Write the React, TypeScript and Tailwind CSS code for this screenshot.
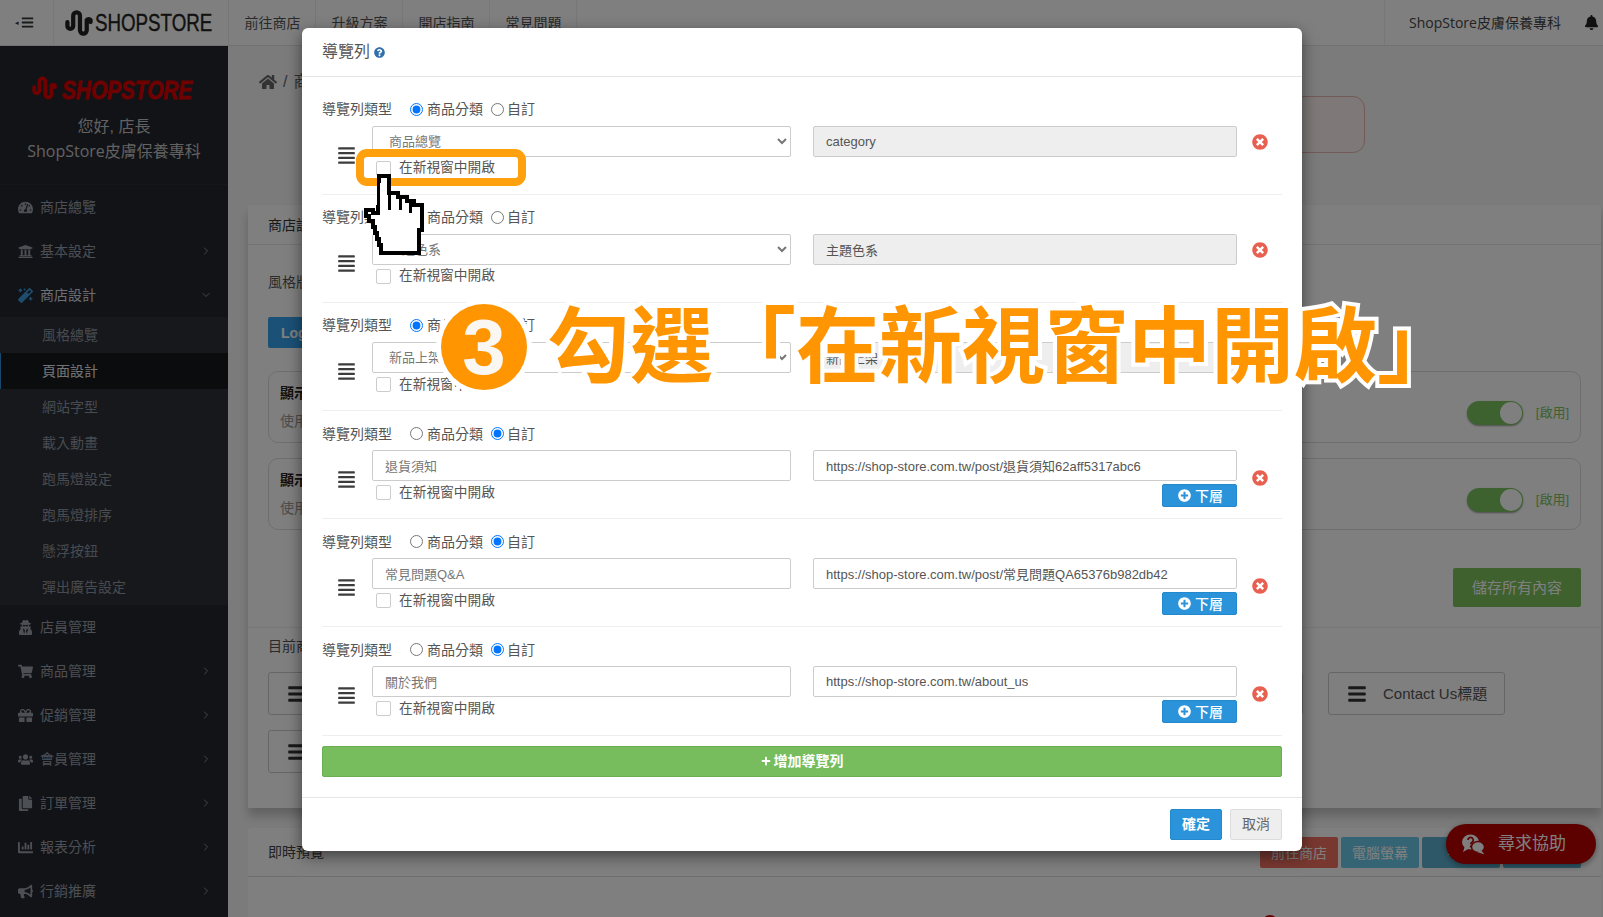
import React from "react";
import { ChevronDown, ChevronRight } from "lucide-react";
import {
  FaAlignJustify, FaBars, FaBell, FaBullhorn, FaChartBar, FaCopy, FaGift, FaHome, FaMagic,
  FaPlus, FaPlusCircle, FaQuestionCircle, FaShoppingCart, FaTachometerAlt, FaTimesCircle, FaUniversity, FaUserSecret, FaUsers,
} from "react-icons/fa";

const SideItem = ({ icon, label, arrow, open, active }: { icon: React.ReactNode; label: string; arrow?: boolean; open?: boolean; active?: boolean }) => (
  <div className={`h-[44px] flex items-center pl-[17px] pr-[16px] text-sm ${active ? "text-[#d8dde4]" : "text-[#989ea7]"}`}>
    <span className={`w-[16px] flex justify-center text-[15px] ${active ? "text-[#3c9be0]" : "text-[#989ea7]"}`}>{icon}</span>
    <span className="ml-[7px] flex-1">{label}</span>
    {arrow && <ChevronRight size={12} strokeWidth={1.5} className="text-[#a6acb4]" />}
    {open && <ChevronDown size={12} strokeWidth={1.5} className="text-[#a6acb4]" />}
  </div>
);

const Wave = ({ className }: { className: string }) => (
  <svg viewBox="0 0 29 28" className={`shrink-0 ${className}`} fill="none" stroke="currentColor" strokeWidth="4.4" strokeLinecap="round">
    <path d="M2.5 13V17A3 3 0 0 0 8.5 17V6.5A3.5 3.5 0 0 1 15.5 6.5V21.5A3.5 3.5 0 0 0 22.5 21.5V11A2.5 2.5 0 0 1 26.5 11V13" />
  </svg>
);

const TopBar = () => (
  <div className="h-[46px] bg-white border-b border-[#e2e2e2] flex text-sm text-[#555]">
    <div className="w-[54px] border-r border-[#eee] flex items-center justify-center gap-[2px] pr-[4px] text-[#333]">
      <span className="text-[7px]">◂</span>
      <FaBars className="text-[13px]" />
    </div>
    <div className="w-[175px] border-r border-[#eee] flex items-center pl-[11px] text-[#222] overflow-hidden">
      <Wave className="w-[28px] h-[28px]" />
      <span className="text-[24px] leading-none ml-[2px] origin-left scale-x-[0.78] whitespace-nowrap [-webkit-text-stroke:0.4px_#222]">SHOPSTORE</span>
    </div>
    {["前往商店", "升級方案", "開店指南", "常見問題"].map((t) => (
      <div key={t} className="w-[87px] border-r border-[#eee] flex items-center justify-center pl-[1px]">{t}</div>
    ))}
    <div className="flex-1" />
    <div className="w-[219px] border-l border-[#eee] flex items-center pl-[24px] [font-family:'Open_Sans','Noto_Sans_CJK_TC',sans-serif] text-[#444]">
      <span>ShopStore皮膚保養專科</span>
      <FaBell className="ml-[23px] text-[15px] text-[#222]" />
    </div>
  </div>
);

const Sidebar = () => (
  <aside className="w-[228px] shrink-0 bg-[#25272f] overflow-hidden">
    <div className="h-[139px] border-b border-[#2c2e37] flex flex-col items-center pt-[28px]">
      <div className="flex items-center text-[#dc0000] w-[165px] h-[28px]">
        <Wave className="w-[25px] h-[28px]" />
        <span className="font-bold italic text-[26px] leading-none ml-[5px] mt-[3px] origin-left scale-x-[0.8] whitespace-nowrap [-webkit-text-stroke:0.8px_#dc0000]">SHOPSTORE</span>
      </div>
      <div className="mt-[12px] text-base leading-[25px] text-center text-[#c4c4c4]">
        您好, 店長
        <br />
        <span className="[font-family:'Open_Sans','Noto_Sans_CJK_TC',sans-serif]">ShopStore皮膚保養專科</span>
      </div>
    </div>
    <SideItem icon={<FaTachometerAlt />} label="商店總覽" />
    <SideItem icon={<FaUniversity />} label="基本設定" arrow />
    <SideItem icon={<FaMagic />} label="商店設計" open active />
    <div className="bg-[#2d3038] text-sm text-[#8f969f]">
      {["風格總覽", "頁面設計", "網站字型", "載入動畫", "跑馬燈設定", "跑馬燈排序", "懸浮按鈕", "彈出廣告設定"].map((t) =>
        t === "頁面設計" ? (
          <div key={t} className="h-[36px] flex items-center pl-[41px] bg-[#17181c] border-l border-[#2f8fd6] text-[#e8e8e8]">{t}</div>
        ) : (
          <div key={t} className="h-[36px] flex items-center pl-[42px]">{t}</div>
        ),
      )}
    </div>
    <SideItem icon={<FaUserSecret />} label="店員管理" />
    <SideItem icon={<FaShoppingCart />} label="商品管理" arrow />
    <SideItem icon={<FaGift />} label="促銷管理" arrow />
    <SideItem icon={<FaUsers />} label="會員管理" arrow />
    <SideItem icon={<FaCopy />} label="訂單管理" arrow />
    <SideItem icon={<FaChartBar />} label="報表分析" arrow />
    <SideItem icon={<FaBullhorn />} label="行銷推廣" arrow />
  </aside>
);

const FeaturePanel = ({ className }: { className: string }) => (
  <div className={`h-[72px] border border-[#ddd] rounded-[10px] flex items-center pl-[11px] pr-[11px] ${className}`}>
    <div className="flex-1 text-[#444] text-sm leading-[28px]">
      <div className="font-bold text-[#222]">顯示</div>
      <div className="text-[#999]">使用</div>
    </div>
    <div className="mt-[12px] w-[56px] h-[24px] rounded-full bg-[#7dc45f] flex justify-end items-center pr-[1px] shadow-[0_1px_2px_rgba(0,0,0,0.4)]">
      <span className="w-[22px] h-[22px] rounded-full bg-white" />
    </div>
    <span className="mt-[12px] ml-[13px] text-[13px] text-[#7dc45f]">[啟用]</span>
  </div>
);

const NavBox = ({ w, label }: { w: string; label?: string }) => (
  <div className={`${w} h-[43px] border border-[#ccc] rounded-[3px] flex items-center pl-[18px] shrink-0 text-[15px] text-[#555]`}>
    <FaBars className="text-[20px] text-[#333]" />
    {label && <span className="ml-[16px]">{label}</span>}
  </div>
);

const Main = () => (
  <main className="flex-1 bg-[#f6f6f6] min-w-0 overflow-hidden pl-5 pr-[2px]">
    <div className="h-[159px] pt-[26px]">
      <div className="h-[20px] flex items-center text-[#666] text-base gap-[6px] pl-[11px]">
        <FaHome className="text-[18px]" />
        <span>/</span>
        <span>商店設計</span>
      </div>
      <div className="w-[500px] h-[57px] mt-[4px] ml-[617px] border border-[#e4b4ae] bg-[#fdf1f0] rounded-[12px]" />
    </div>

    <section className="h-[603px] bg-white rounded-t-[4px] shadow-[0_8px_10px_rgba(0,0,0,0.2)] text-sm text-[#555]">
      <div className="h-[40px] border-b border-[#e6e6e6] flex items-center px-5 text-[#333]">商店設計</div>
      <div className="px-5 pt-[27px]">
        <div className="h-[20px] leading-[20px]">風格版型</div>
        <div className="mt-[25px] w-[90px] h-[31px] bg-[#36a3ee] rounded-[2px] text-white font-bold flex items-center pl-[13px]">Logo</div>
        <FeaturePanel className="mt-[23px]" />
        <FeaturePanel className="mt-[15px]" />
        <div className="mt-[38px] flex justify-end">
          <div className="w-[128px] h-[39px] bg-[#7cc25c] rounded-[2px] text-white text-[15px] flex items-center justify-center">儲存所有內容</div>
        </div>
      </div>
      <div className="mt-[20px] border-t border-[#eee] px-5 pt-[8px]">
        <div className="h-[20px] leading-[20px]">目前商店導覽列</div>
        <div className="mt-[16px] flex gap-[25px]">
          <NavBox w="w-[187px]" />
          <NavBox w="w-[187px]" />
          <NavBox w="w-[187px]" />
          <NavBox w="w-[187px]" />
          <NavBox w="w-[187px]" />
          <NavBox w="w-[177px]" label="Contact Us標題" />
        </div>
        <div className="mt-[15px]">
          <NavBox w="w-[187px]" />
        </div>
      </div>
    </section>

    <section className="mt-[20px] h-[100px] bg-white rounded-t-[4px]">
      <div className="h-[49px] border-b border-[#ddd] flex items-center justify-between pl-5 pr-5 text-sm text-[#444]">
        <span className="mb-[1px]">即時預覽</span>
        <div className="flex gap-[3px] text-white text-sm mt-[1px]">
          <div className="w-[78px] h-[31px] bg-[#f07060] flex items-center justify-center rounded-[2px]">前往商店</div>
          <div className="w-[78px] h-[31px] bg-[#6ac8e8] flex items-center justify-center rounded-[2px]">電腦螢幕</div>
          <div className="w-[78px] h-[31px] bg-[#5cb0d0] flex items-center justify-center rounded-[2px]">平板</div>
          <div className="w-[78px] h-[31px] bg-[#5cb0d0] flex items-center justify-center rounded-[2px]">手機</div>
        </div>
      </div>
      <div className="ml-[1014px] mt-[38px] w-4 h-4 rounded-full bg-[#d00000]" />
    </section>
  </main>
);

type Row = { kind: "cat" | "own"; name: string; url: string };
const rows: Row[] = [
  { kind: "cat", name: "商品總覽", url: "category" },
  { kind: "cat", name: "主題色系", url: "主題色系" },
  { kind: "cat", name: "新品上架", url: "新品上架" },
  { kind: "own", name: "退貨須知", url: "https://shop-store.com.tw/post/退貨須知62aff5317abc6" },
  { kind: "own", name: "常見問題Q&A", url: "https://shop-store.com.tw/post/常見問題QA65376b982db42" },
  { kind: "own", name: "關於我們", url: "https://shop-store.com.tw/about_us" },
];

const NavRow = ({ row, i }: { row: Row; i: number }) => (
  <div className="h-[108.2px] border-b border-[#eee] text-sm text-[#555]">
    <div className="h-[39px] pt-[12.5px] flex items-start leading-[20px]">
      <span className="w-[88px]">導覽列類型</span>
      <label className="flex items-center h-[20px]">
        <input type="radio" name={`k${i}`} defaultChecked={row.kind === "cat"} className="m-0 w-[13px] h-[13px]" />
        <span className="ml-[4px]">商品分類</span>
      </label>
      <label className="flex items-center h-[20px] ml-[8px]">
        <input type="radio" name={`k${i}`} defaultChecked={row.kind === "own"} className="m-0 w-[13px] h-[13px]" />
        <span className="ml-[3px]">自訂</span>
      </label>
    </div>
    <div className="flex items-start">
      <div className="w-[50px] pl-[15px] pt-[20px] text-[#3c3c3c]">
        <FaAlignJustify className="text-[19px]" />
      </div>
      <div className="w-[419px]">
        {row.kind === "cat" ? (
          <select className="w-full h-[31px] border border-[#ccc] rounded-[2px] bg-white pl-[12px] text-[#777] text-[13px]">
            <option>{row.name}</option>
          </select>
        ) : (
          <input readOnly defaultValue={row.name} className="w-full h-[31px] border border-[#ccc] rounded-[2px] px-[12px] text-[#777] text-[13px]" />
        )}
        <label className="flex items-center mt-[2px] h-[19px] pl-[4px]">
          <input type="checkbox" className="appearance-none m-0 w-[15px] h-[15px] border border-[#ccc] rounded-[2px] bg-white" />
          <span className="ml-[8px] text-[13.7px]">在新視窗中開啟</span>
        </label>
      </div>
      <div className="w-[424px] ml-[22px]">
        <input
          readOnly
          defaultValue={row.url}
          className={`w-full h-[31px] border border-[#ccc] rounded-[2px] px-[12px] text-[#555] text-[13px] ${row.kind === "cat" ? "bg-[#eee]" : "bg-white"}`}
        />
        {row.kind === "own" && (
          <div className="flex justify-end mt-[3px]">
            <div className="w-[75px] h-[23px] bg-[#2a93d9] border border-[#2488cc] rounded-[2px] text-white font-medium flex items-center justify-center gap-[4px] pl-[2px]">
              <FaPlusCircle className="text-[13px]" />
              <span>下層</span>
            </div>
          </div>
        )}
      </div>
      <div className={`w-[45px] flex justify-center text-[#e8604f] text-[16px] ${row.kind === "own" ? "pt-[20px]" : "pt-[8px]"}`}>
        <FaTimesCircle />
      </div>
    </div>
  </div>
);

const Modal = () => (
  <div className="absolute left-[302px] top-[28px] w-[1000px] h-[823px] bg-white rounded-[6px] shadow-[0_5px_15px_rgba(0,0,0,0.5)] flex flex-col">
    <div className="h-[49px] border-b border-[#e5e5e5] flex items-center pl-5 text-base text-[#555]">
      <span>導覽列</span>
      <FaQuestionCircle className="ml-[4px] text-[11px] text-[#2f6fad]" />
    </div>
    <div className="px-5 pt-[9.5px]">
      {rows.map((r, i) => (
        <NavRow key={i} row={r} i={i} />
      ))}
      <div className="mt-[10.3px] h-[31px] bg-[#77bd5e] border border-[#6cae54] rounded-[2px] text-white text-sm font-bold flex items-center justify-center gap-[3px]">
        <FaPlus className="text-[10px]" />
        <span>增加導覽列</span>
      </div>
    </div>
    <div className="mt-[20px] border-t border-[#e5e5e5] flex justify-end gap-[8px] pr-5 pt-[11px]">
      <div className="w-[52px] h-[31px] bg-[#2a93d9] border border-[#2488cc] rounded-[2px] text-white text-sm font-bold flex items-center justify-center">確定</div>
      <div className="w-[52px] h-[31px] bg-[#eee] border border-[#ddd] rounded-[2px] text-[#666] text-sm flex items-center justify-center">取消</div>
    </div>
  </div>
);

const Hand = () => (
  <svg className="absolute left-[355px] top-[170px]" width="75" height="90" viewBox="355 170 75 90" shapeRendering="crispEdges">
    <path
      d="M379 176H389V193H398V197H407V201H414V205H422V230H419V253H381V245H379V239H377V233H375V227H373V221H369V216H366V210H373V213H378Z"
      fill="#fff"
      stroke="#000"
      strokeWidth="3.4"
    />
    <path d="M389 192V210M400 197V210M410 202V213" stroke="#000" strokeWidth="3" fill="none" />
  </svg>
);

const Annotation = () => (
  <>
    <div className="absolute left-[356px] top-[149px] w-[170px] h-[37px] border-[8px] border-[#ffa00f] rounded-[11px]" />
    <Hand />
    <div className="absolute left-[441px] top-[304px] w-[86px] h-[86px] rounded-full bg-[#ff9500] shadow-[0_0_0_5px_white] flex items-center justify-center text-[#faf6f2] text-[78px] font-bold leading-none">3</div>
    <div className="absolute left-[547px] top-[299px] whitespace-nowrap text-[83px] leading-[98px] font-bold text-[#ff9500] [-webkit-text-stroke:8px_white] [paint-order:stroke_fill]">
      勾選「在新視窗中開啟」
    </div>
  </>
);

export default function App() {
  return (
    <div className="relative w-[1603px] h-[917px] overflow-hidden [font-family:'Liberation_Sans','Noto_Sans_CJK_TC',sans-serif]">
      <TopBar />
      <div className="flex h-[871px]">
        <Sidebar />
        <Main />
      </div>
      <div className="absolute left-[1446px] top-[824px] w-[150px] h-[40px] rounded-full bg-[#b80000] shadow-[0_2px_6px_rgba(0,0,0,0.4)] flex items-center text-white text-[17px] pl-[16px]">
        <svg width="23" height="21" viewBox="0 0 23 21" fill="currentColor" className="shrink-0">
          <ellipse cx="8.5" cy="8" rx="8.5" ry="7.5" />
          <path d="M3 12 1 18 8 14Z" />
          <ellipse cx="16" cy="13" rx="6.5" ry="5.5" stroke="#b80000" strokeWidth="1.4" />
          <path d="M19 16 22.5 20.5 15 18Z" />
          <path d="M6 6a2.6 2.6 0 1 1 4 2.2c-1 .6-1.3 1-1.3 2" fill="none" stroke="#b80000" strokeWidth="1.7" />
          <circle cx="8.7" cy="12.4" r="1" fill="#b80000" />
        </svg>
        <span className="ml-[13px]">尋求協助</span>
      </div>
      <div className="absolute inset-0 bg-black/50" />
      <Modal />
      <Annotation />
    </div>
  );
}
